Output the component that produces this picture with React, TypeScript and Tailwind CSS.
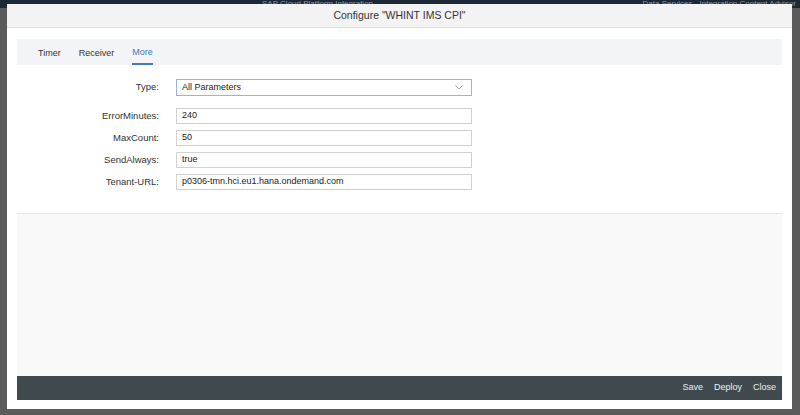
const font = { fontFamily: '"Liberation Sans", Arial, sans-serif' };

const fields = [
  { label: "ErrorMinutes:", value: "240" },
  { label: "MaxCount:", value: "50" },
  { label: "SendAlways:", value: "true" },
  { label: "Tenant-URL:", value: "p0306-tmn.hci.eu1.hana.ondemand.com" },
];

function Row({ label, children }: { label: string; children: React.ReactNode }) {
  return (
    <div className="flex items-center">
      <div className="w-[159px] pr-[17px] text-right text-[9.5px] text-[#333]">{label}</div>
      {children}
    </div>
  );
}

export default function App() {
  return (
    <div className="relative w-[800px] h-[415px] overflow-hidden bg-[#5b5b5b]" style={font}>
      {/* shell bar behind the dialog */}
      <div className="h-[8px] bg-[#1c2835] flex items-start text-[8px] leading-[8px] text-[#8d98a4]">
        <span className="ml-[262px]">SAP Cloud Platform Integration</span>
        <span className="ml-auto mr-[4px]">Data Services - Integration Content Advisor</span>
      </div>

      <div className="absolute left-[7px] top-[4px] w-[785px] h-[405px] bg-white flex flex-col">
        <div className="h-[24px] shrink-0 bg-[#f3f3f3] border-b border-[#dcdcdc] flex items-center justify-center text-[10.5px] text-[#333]">
          Configure "WHINT IMS CPI"
        </div>

        <div className="flex-1 flex flex-col px-[10px] pt-[11px]">
          <div className="h-[26px] shrink-0 bg-[#f2f4f7] flex items-stretch pl-[21px] gap-[18px] text-[9px]">
            <div className="flex items-center text-[#333] pt-[3px]">Timer</div>
            <div className="flex items-center text-[#333] pt-[3px]">Receiver</div>
            <div className="flex items-center text-[#3f7ab0] border-b-2 border-[#3f7ab0] pt-[3px]">More</div>
          </div>

          <div className="h-[148px] shrink-0 flex flex-col pt-[14px]">
            <Row label="Type:">
              <div className="w-[296px] h-[17px] border border-[#98b6d4] bg-white flex items-center justify-between pl-[5px] pr-[8px] text-[9px] text-[#222]">
                <span>All Parameters</span>
                <svg width="8" height="5" viewBox="0 0 8 5" fill="none" stroke="#a3a8ad" strokeWidth="1">
                  <path d="M0.5 0.5 L4 4 L7.5 0.5" />
                </svg>
              </div>
            </Row>
            <div className="flex flex-col gap-[6px] mt-[12px]">
              {fields.map((f) => (
                <Row key={f.label} label={f.label}>
                  <div className="w-[296px] h-[16px] border border-[#d2d2d2] bg-white flex items-center pl-[5px] text-[9px] text-[#222]">
                    {f.value}
                  </div>
                </Row>
              ))}
            </div>
          </div>

          <div className="flex-1 bg-[#f9f9f9] border-t border-[#e6e6e6]" />

          <div className="h-[24px] shrink-0 bg-[#404a4e] flex items-center justify-end gap-[11px] pr-[6px] text-[9px] text-[#eef0f0]">
            <span>Save</span>
            <span>Deploy</span>
            <span>Close</span>
          </div>
          <div className="h-[9px] shrink-0" />
        </div>
      </div>
    </div>
  );
}
